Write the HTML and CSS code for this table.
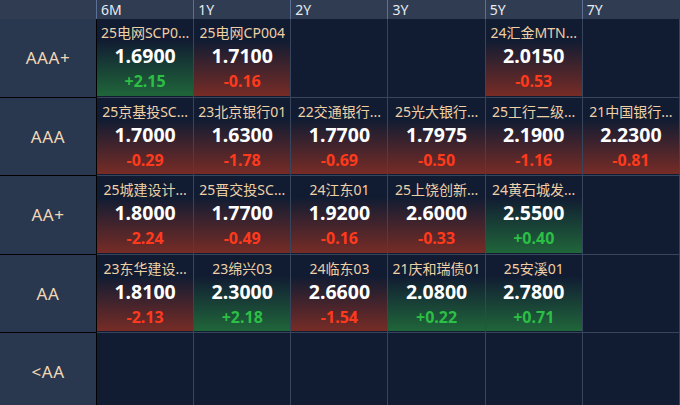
FILE: index.html
```html
<!DOCTYPE html>
<html lang="zh">
<head>
<meta charset="utf-8">
<link rel="stylesheet" href="styles.css">
</head>
<body>
<div class="grid">
  <div class="corner"></div>
  <div class="hd">6M</div>
  <div class="hd">1Y</div>
  <div class="hd">2Y</div>
  <div class="hd">3Y</div>
  <div class="hd">5Y</div>
  <div class="hd">7Y</div>

  <div class="lbl">AAA+</div>
  <div class="cell"><div class="card up"><div class="nm">25电网SCP0...</div><div class="px">1.6900</div><div class="ch">+2.15</div></div></div>
  <div class="cell"><div class="card dn"><div class="nm">25电网CP004</div><div class="px">1.7100</div><div class="ch">-0.16</div></div></div>
  <div class="cell"></div>
  <div class="cell"></div>
  <div class="cell"><div class="card dn"><div class="nm">24汇金MTN...</div><div class="px">2.0150</div><div class="ch">-0.53</div></div></div>
  <div class="cell"></div>

  <div class="lbl">AAA</div>
  <div class="cell"><div class="card dn"><div class="nm">25京基投SC...</div><div class="px">1.7000</div><div class="ch">-0.29</div></div></div>
  <div class="cell"><div class="card dn"><div class="nm">23北京银行01</div><div class="px">1.6300</div><div class="ch">-1.78</div></div></div>
  <div class="cell"><div class="card dn"><div class="nm">22交通银行...</div><div class="px">1.7700</div><div class="ch">-0.69</div></div></div>
  <div class="cell"><div class="card dn"><div class="nm">25光大银行...</div><div class="px">1.7975</div><div class="ch">-0.50</div></div></div>
  <div class="cell"><div class="card dn"><div class="nm">25工行二级...</div><div class="px">2.1900</div><div class="ch">-1.16</div></div></div>
  <div class="cell"><div class="card dn"><div class="nm">21中国银行...</div><div class="px">2.2300</div><div class="ch">-0.81</div></div></div>

  <div class="lbl">AA+</div>
  <div class="cell"><div class="card dn"><div class="nm">25城建设计...</div><div class="px">1.8000</div><div class="ch">-2.24</div></div></div>
  <div class="cell"><div class="card dn"><div class="nm">25晋交投SC...</div><div class="px">1.7700</div><div class="ch">-0.49</div></div></div>
  <div class="cell"><div class="card dn"><div class="nm">24江东01</div><div class="px">1.9200</div><div class="ch">-0.16</div></div></div>
  <div class="cell"><div class="card dn"><div class="nm">25上饶创新...</div><div class="px">2.6000</div><div class="ch">-0.33</div></div></div>
  <div class="cell"><div class="card up"><div class="nm">24黄石城发...</div><div class="px">2.5500</div><div class="ch">+0.40</div></div></div>
  <div class="cell"></div>

  <div class="lbl">AA</div>
  <div class="cell"><div class="card dn"><div class="nm">23东华建设...</div><div class="px">1.8100</div><div class="ch">-2.13</div></div></div>
  <div class="cell"><div class="card up"><div class="nm">23绵兴03</div><div class="px">2.3000</div><div class="ch">+2.18</div></div></div>
  <div class="cell"><div class="card dn"><div class="nm">24临东03</div><div class="px">2.6600</div><div class="ch">-1.54</div></div></div>
  <div class="cell"><div class="card up"><div class="nm">21庆和瑞债01</div><div class="px">2.0800</div><div class="ch">+0.22</div></div></div>
  <div class="cell"><div class="card up"><div class="nm">25安溪01</div><div class="px">2.7800</div><div class="ch">+0.71</div></div></div>
  <div class="cell"></div>

  <div class="lbl">&lt;AA</div>
  <div class="cell"></div>
  <div class="cell"></div>
  <div class="cell"></div>
  <div class="cell"></div>
  <div class="cell"></div>
  <div class="cell"></div>
</div>
</body>
</html>
```

FILE: styles.css
```css
html, body {
  margin: 0;
  padding: 0;
  background: #111c32;
  overflow: hidden;
}
body {
  width: 680px;
  height: 405px;
  font-family: "Noto Sans", "Noto Sans CJK SC", sans-serif;
}
.grid {
  display: grid;
  grid-template-columns: 97px repeat(6, 1fr);
  grid-template-rows: 19px repeat(5, 78.5px);
  width: 680px;
}
.corner {
  background: #303c51;
  border-right: 1px solid #5c7098;
}
.hd {
  background: #303c51;
  color: #e4ebf3;
  font-size: 14px;
  line-height: 19px;
  padding-left: 4px;
  border-left: 1px solid #5c7098;
  margin-left: -1px;
}
.hd:first-of-type { margin-left: 0; border-left: none; }
.lbl {
  background: #29384f;
  color: #f2d7b6;
  font-size: 17px;
  letter-spacing: 0.6px;
  display: flex;
  align-items: center;
  justify-content: center;
  border-right: 1px solid #000;
  border-bottom: 1px solid #000;
}
.cell {
  border-right: 1px solid #36445c;
  border-bottom: 1px solid #36445c;
  padding-bottom: 1px;
  display: flex;
  min-width: 0;
}
.card {
  flex: 1;
  min-width: 0;
  display: flex;
  flex-direction: column;
  align-items: center;
  padding-top: 4px;
  overflow: hidden;
}
.card.up { background: linear-gradient(to bottom, rgba(31, 99, 54, 0) 28%, #20663a 100%); }
.card.dn { background: linear-gradient(to bottom, rgba(117, 43, 36, 0) 28%, #772c26 100%); }
.nm {
  color: #efd0a6;
  font-size: 14px;
  line-height: 20px;
  white-space: nowrap;
  overflow: hidden;
  max-width: 92px;
}
.px {
  color: #ffffff;
  font-size: 19.5px;
  font-weight: 700;
  line-height: 26px;
}
.ch {
  font-size: 16px;
  font-weight: 700;
  line-height: 24px;
}
.up .ch { color: #2cbf45; }
.dn .ch { color: #ff3a1c; }
```
